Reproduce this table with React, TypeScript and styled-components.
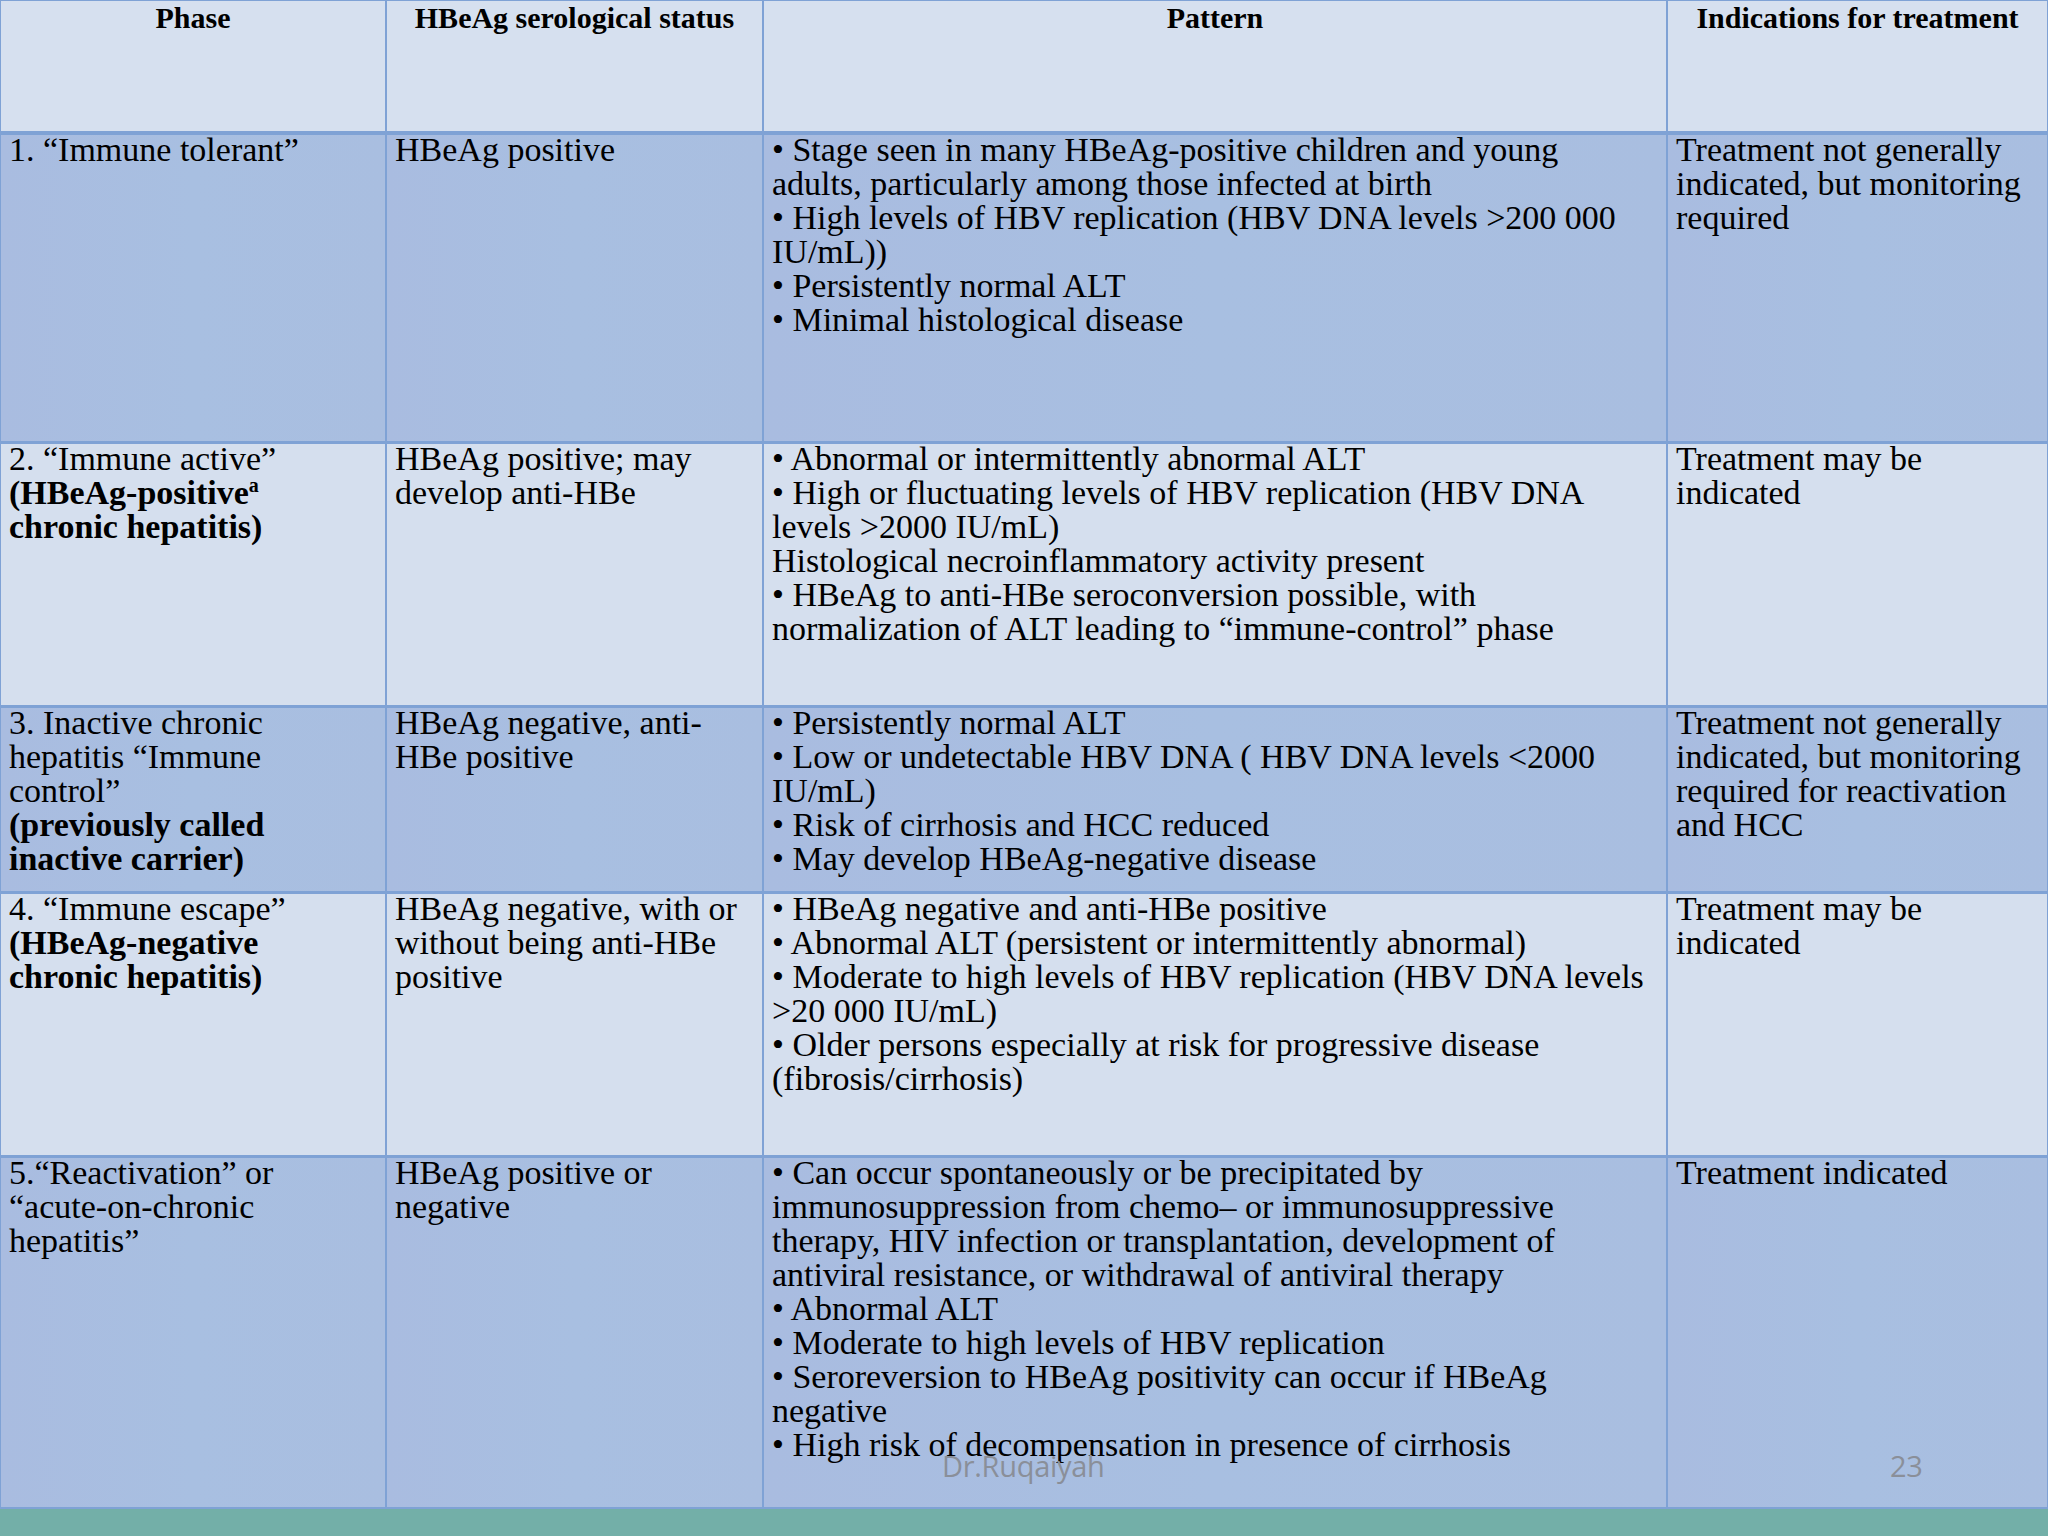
import React, { FC, Fragment, ReactNode } from 'react';
import styled, { createGlobalStyle } from 'styled-components';

const GlobalStyle = createGlobalStyle`
	html, body {
		margin: 0;
		padding: 0;
		background: #d5dfee;
	}
`;

const Slide = styled('div')`
	position: relative;
	width: 2048px;
	height: 1536px;
	display: flex;
	flex-direction: column;
	overflow: hidden;
	font-family: 'Liberation Serif', 'Times New Roman', serif;
	color: #000000;
`;

const Table = styled('div')`
	display: grid;
	grid-template-columns: 384px 375px 902px 379px;
	grid-template-rows: 131px 306px 261px 183px 261px 349px;
	column-gap: 2px;
	row-gap: 3px;
	padding: 1px 1px 2px 1px;
	background: #7fa2d5;
`;

const HeaderCell = styled('div')`
	background: #d6e0ef;
	border-bottom: 1px solid #7fa2d5;
	font-size: 30px;
	line-height: 34px;
	font-weight: bold;
	text-align: center;
	white-space: nowrap;
`;

const Cell = styled('div')<{ $tone: 'light' | 'dark' }>`
	background: ${(p) =>
		p.$tone === 'dark'
			? 'linear-gradient(90deg, #a9bce0 0%, #a8bfe1 50%, #a9bee0 100%)'
			: '#d5dfee'};
	padding: 0 6px 0 8px;
	font-size: 34px;
	line-height: 34px;
	white-space: nowrap;
`;

const CellBody = styled('div')`
	margin-top: -2px;
`;

const Line = styled('div')`
	display: block;
`;

const Strong = styled('span')`
	font-weight: bold;
`;

const Sup = styled('sup')`
	font-size: 20px;
	line-height: 0;
	vertical-align: 12px;
`;

const Band = styled('div')`
	flex: 1;
	background: #73afa8;
`;

const Placeholder = styled('div')<{ $left: number }>`
	position: absolute;
	top: 1446px;
	left: ${(p) => p.$left}px;
	font-family: 'Open Sans', 'Liberation Sans', sans-serif;
	font-size: 29px;
	line-height: 40px;
	color: #8a8f99;
	letter-spacing: -0.3px;
`;

type Row = {
	phase: ReactNode[];
	status: string[];
	pattern: string[];
	treatment: string[];
};

const rows: Row[] = [
	{
		phase: ['1. \u201cImmune tolerant\u201d'],
		status: ['HBeAg positive'],
		pattern: [
			'\u2022 Stage seen in many HBeAg-positive children and young',
			'adults, particularly among those infected at birth',
			'\u2022 High levels of HBV replication (HBV DNA levels >200 000',
			'IU/mL))',
			'\u2022 Persistently normal ALT',
			'\u2022 Minimal histological disease',
		],
		treatment: ['Treatment not generally', 'indicated, but monitoring', 'required'],
	},
	{
		phase: [
			'2. \u201cImmune active\u201d',
			<Strong key="b1">
				(HBeAg-positive<Sup>a</Sup>
			</Strong>,
			<Strong key="b2">chronic hepatitis)</Strong>,
		],
		status: ['HBeAg positive; may', 'develop anti-HBe'],
		pattern: [
			'\u2022 Abnormal or intermittently abnormal ALT',
			'\u2022 High or fluctuating levels of HBV replication (HBV DNA',
			'levels >2000 IU/mL)',
			'Histological necroinflammatory activity present',
			'\u2022 HBeAg to anti-HBe seroconversion possible, with',
			'normalization of ALT leading to \u201cimmune-control\u201d phase',
		],
		treatment: ['Treatment may be', 'indicated'],
	},
	{
		phase: [
			'3. Inactive chronic',
			'hepatitis \u201cImmune',
			'control\u201d',
			<Strong key="b1">(previously called</Strong>,
			<Strong key="b2">inactive carrier)</Strong>,
		],
		status: ['HBeAg negative, anti-', 'HBe positive'],
		pattern: [
			'\u2022 Persistently normal ALT',
			'\u2022 Low or undetectable HBV DNA ( HBV DNA levels <2000',
			'IU/mL)',
			'\u2022 Risk of cirrhosis and HCC reduced',
			'\u2022 May develop HBeAg-negative disease',
		],
		treatment: [
			'Treatment not generally',
			'indicated, but monitoring',
			'required for reactivation',
			'and HCC',
		],
	},
	{
		phase: [
			'4. \u201cImmune escape\u201d',
			<Strong key="b1">(HBeAg-negative</Strong>,
			<Strong key="b2">chronic hepatitis)</Strong>,
		],
		status: ['HBeAg negative, with or', 'without being anti-HBe', 'positive'],
		pattern: [
			'\u2022 HBeAg negative and anti-HBe positive',
			'\u2022 Abnormal ALT (persistent or intermittently abnormal)',
			'\u2022 Moderate to high levels of HBV replication (HBV DNA levels',
			'>20 000 IU/mL)',
			'\u2022 Older persons especially at risk for progressive disease',
			'(fibrosis/cirrhosis)',
		],
		treatment: ['Treatment may be', 'indicated'],
	},
	{
		phase: ['5.\u201cReactivation\u201d or', '\u201cacute-on-chronic', 'hepatitis\u201d'],
		status: ['HBeAg positive or', 'negative'],
		pattern: [
			'\u2022 Can occur spontaneously or be precipitated by',
			'immunosuppression from chemo\u2013 or immunosuppressive',
			'therapy, HIV infection or transplantation, development of',
			'antiviral resistance, or withdrawal of antiviral therapy',
			'\u2022 Abnormal ALT',
			'\u2022 Moderate to high levels of HBV replication',
			'\u2022 Seroreversion to HBeAg positivity can occur if HBeAg',
			'negative',
			'\u2022 High risk of decompensation in presence of cirrhosis',
		],
		treatment: ['Treatment indicated'],
	},
];

const headers = ['Phase', 'HBeAg serological status', 'Pattern', 'Indications for treatment'];

const Lines: FC<{ items: ReactNode[] }> = ({ items }) => (
	<CellBody>
		{items.map((item, i) => (
			<Line key={i}>{item}</Line>
		))}
	</CellBody>
);

const App: FC = () => {
	return (
		<Fragment>
			<GlobalStyle />
			<Slide>
				<Table>
					{headers.map((h) => (
						<HeaderCell key={h}>{h}</HeaderCell>
					))}
					{rows.map((row, i) => {
						const tone = i % 2 === 0 ? 'dark' : 'light';
						return (
							<Fragment key={i}>
								<Cell $tone={tone}>
									<Lines items={row.phase} />
								</Cell>
								<Cell $tone={tone}>
									<Lines items={row.status} />
								</Cell>
								<Cell $tone={tone}>
									<Lines items={row.pattern} />
								</Cell>
								<Cell $tone={tone}>
									<Lines items={row.treatment} />
								</Cell>
							</Fragment>
						);
					})}
				</Table>
				<Band />
				<Placeholder $left={942}>{'Dr.Ruqaiyah'}</Placeholder>
				<Placeholder $left={1890}>{'23'}</Placeholder>
			</Slide>
		</Fragment>
	);
};

export default App;
